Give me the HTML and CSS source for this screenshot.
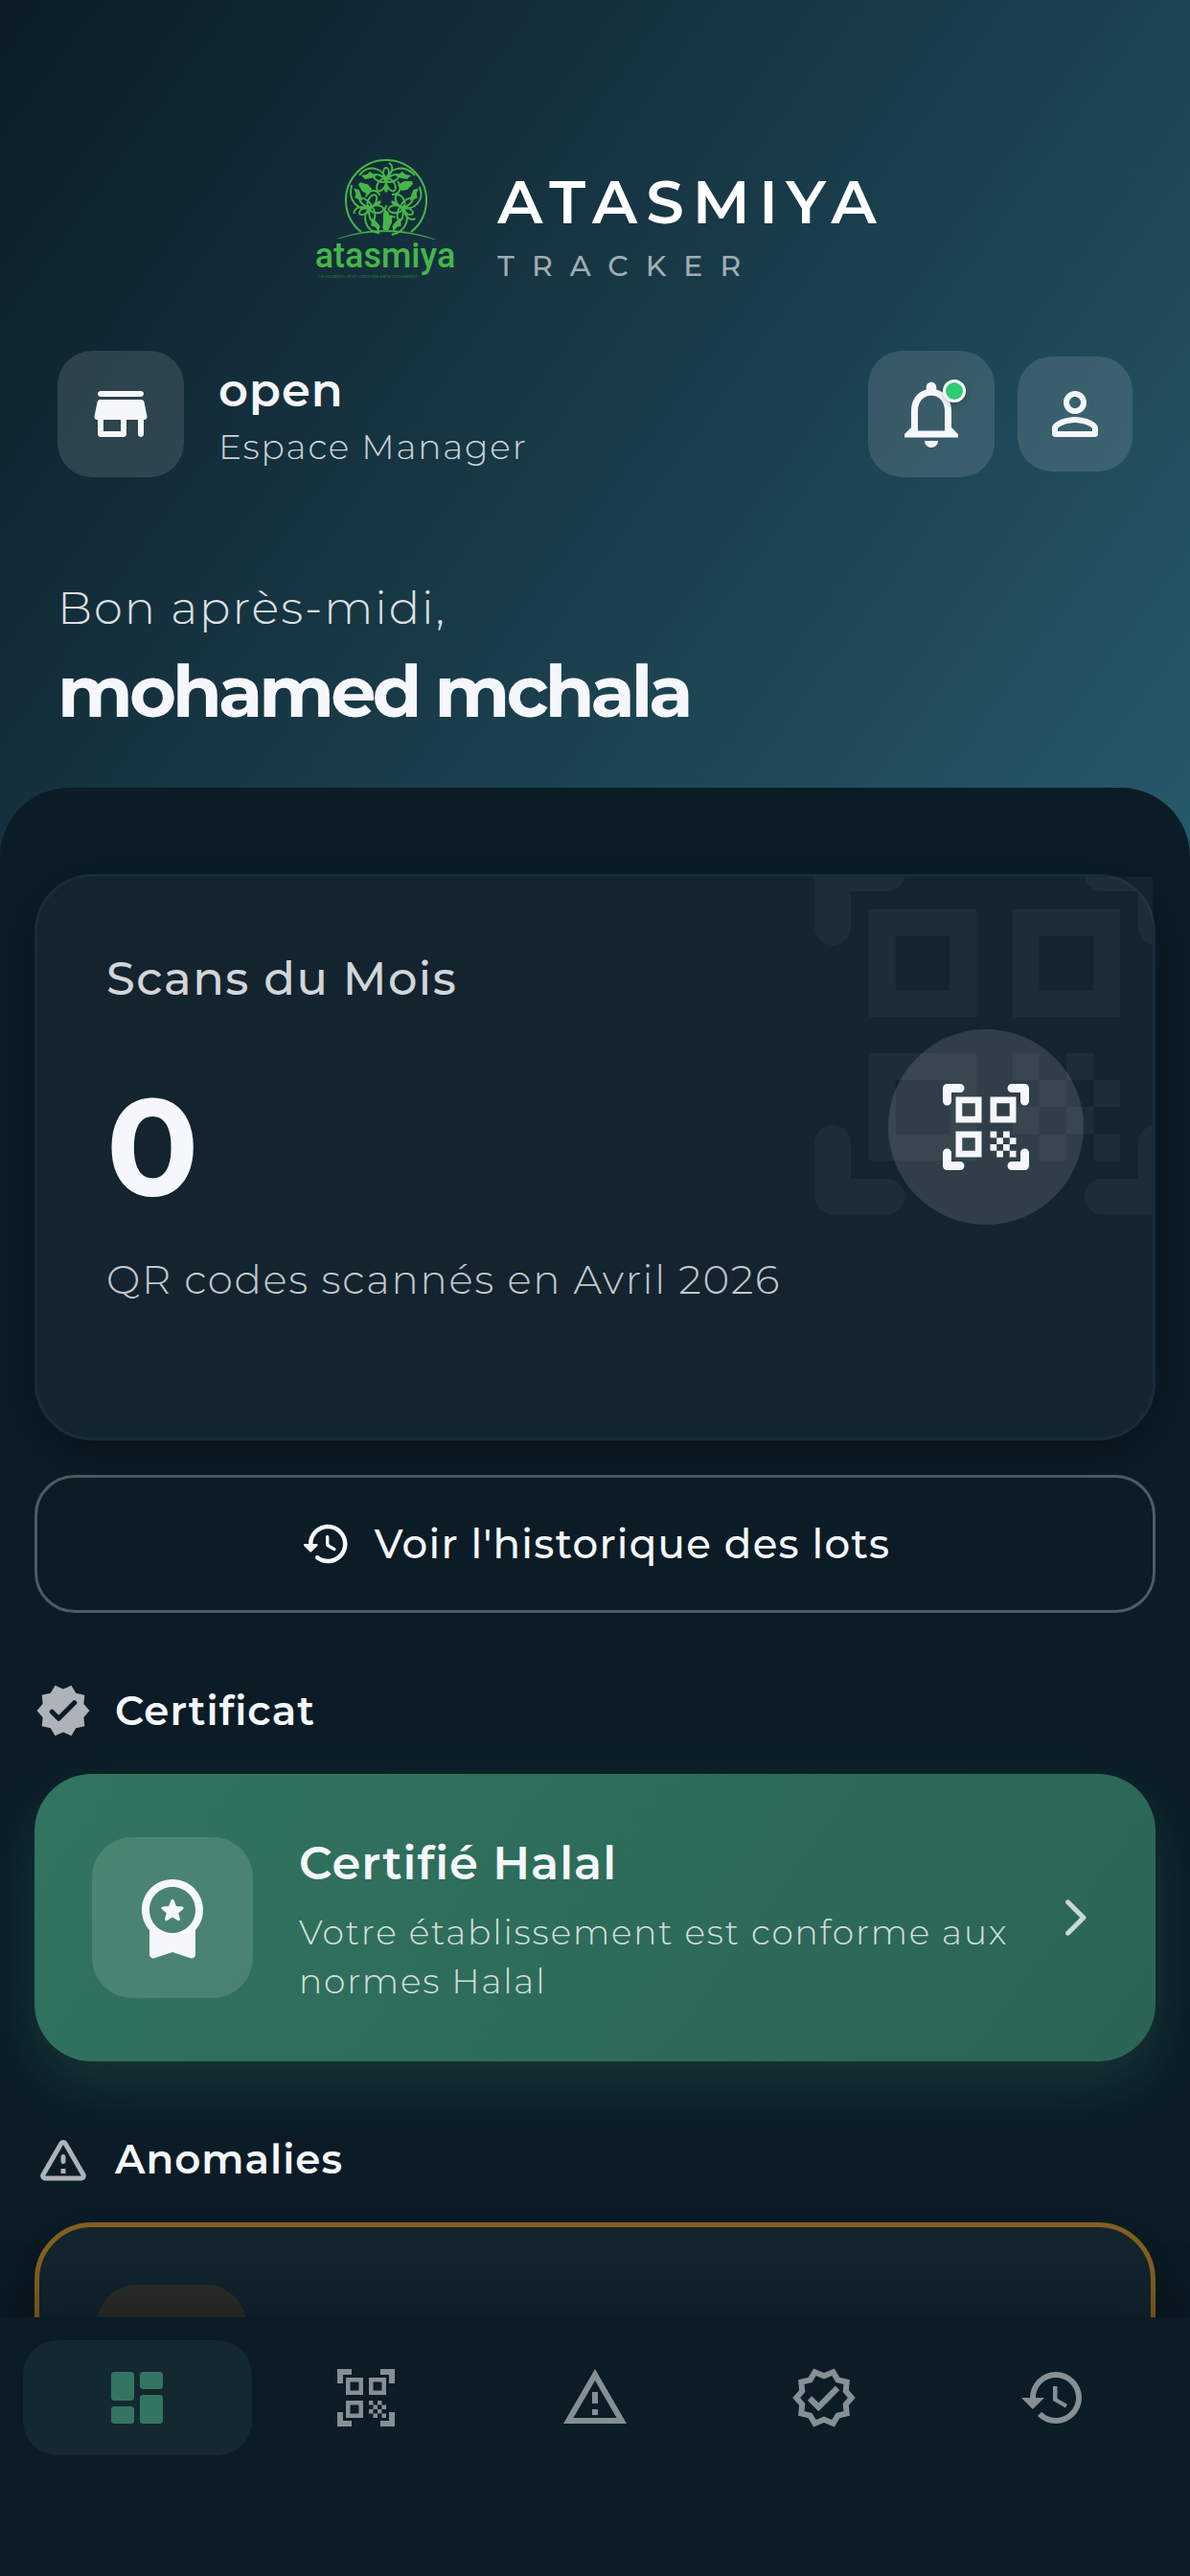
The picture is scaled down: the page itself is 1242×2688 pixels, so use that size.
FILE: index.html
```html
<!DOCTYPE html>
<html lang="fr">
<head>
    <meta charset="UTF-8">
    <meta name="viewport" content="width=device-width, initial-scale=1.0">
    <title>Atasmiya Tracker</title>
    <link rel="stylesheet" href="styles.css">
</head>
<body>
    <!-- Shared icon shapes -->
    <svg class="defs" width="0" height="0" aria-hidden="true">
        <defs>
            <g id="qr-cells">
                <path d="M9.5 6.5v3h-3v-3h3M11 5H5v6h6V5zm-1.5 9.5v3h-3v-3h3M11 13H5v6h6v-6zm6.5-6.5v3h-3v-3h3M19 5h-6v6h6V5zm-6 8h1.5v1.5H13V13zm1.5 1.5H16V16h-1.5v-1.5zM16 13h1.5v1.5H16V13zm-3 3h1.5v1.5H13V16zm1.5 1.5H16V19h-1.5v-1.5zM16 16h1.5v1.5H16V16zm1.5-1.5H19V16h-1.5v-1.5zm0 3H19V19h-1.5v-1.5z"/>
            </g>
            <g id="qr-rounded">
                <use href="#qr-cells"/>
                <path d="M3 6V3h3M18 3h3v3M21 18v3h-3M6 21H3v-3" fill="none" stroke="currentColor" stroke-width="2" stroke-linecap="round" stroke-linejoin="round"/>
            </g>
            <g id="motif">
                <g fill="none" stroke="#46b649" stroke-width="2">
                    <ellipse cx="76" cy="22" rx="3" ry="6"/>
                    <ellipse cx="69" cy="27" rx="3" ry="7" transform="rotate(-65 69 27)"/>
                    <ellipse cx="83" cy="27" rx="3" ry="7" transform="rotate(65 83 27)"/>
                    <ellipse cx="71" cy="34" rx="4" ry="7" transform="rotate(30 71 34)"/>
                    <ellipse cx="81" cy="34" rx="4" ry="7" transform="rotate(-30 81 34)"/>
                    <path d="M76 29c-2-12-18-18-28-5M76 29c2-12 18-18 30-5M79 11c5 3 4 9-1 14M88 30c5 8 2 14-6 14"/>
                </g>
                <path d="M76 32c2 4 3 8 0 10c-3-2-2-6 0-10zM86 25l7-5 3 3 6 1-4 4-6-1zM66 25l-7-5-3 3-6 1 4 4 6-1zM88 34l7-4 8 0 1 3-6 6-6 1z"/>
            </g>
        </defs>
    </svg>

    <div class="app">
        <main class="content">
            <header class="hero">
                <div class="brand">
                    <svg class="logo" viewBox="0 0 150 150" role="img" aria-label="Atasmiya">
                        <path d="M50 83A42 42 0 1 1 102 83" fill="none" stroke="#46b649" stroke-width="2"/>
                        <g fill="#46b649">
                            <use href="#motif"/>
                            <use href="#motif" transform="rotate(120 76 48)"/>
                            <use href="#motif" transform="rotate(240 76 48)"/>
                            <path d="M76 61c4 0 3 6 3 10s2 8-1 10h-4c-3-2-1-6-1-10s-1-10 3-10z"/>
                        </g>
                        <path d="M26 90Q76 72 127 91Q76 75 26 90z" fill="#46b649" stroke="#46b649" stroke-opacity="0.4"/>
                        <text class="logo-name" x="75" y="120" text-anchor="middle">atasmiya</text>
                        <text class="logo-tag" x="5" y="131">La vocation d'un contrôle sans concession</text>
                    </svg>
                    <div class="brand-text">
                        <div class="brand-title">ATASMIYA</div>
                        <div class="brand-subtitle">TRACKER</div>
                    </div>
                </div>

                <div class="user-row">
                    <div class="tile">
                        <svg class="icon" viewBox="0 0 24 24"><path d="M5 6h14c.55 0 1-.45 1-1s-.45-1-1-1H5c-.55 0-1 .45-1 1s.45 1 1 1zm15.16 1.8c-.09-.46-.5-.8-.98-.8H4.82c-.48 0-.89.34-.98.8l-1 5c-.12.62.35 1.2.98 1.2H4v5c0 .55.45 1 1 1h8c.55 0 1-.45 1-1v-5h4v5c0 .55.45 1 1 1s1-.45 1-1v-5h.18c.63 0 1.1-.58.98-1.2l-1-5zM12 18H6v-4h6v4z"/></svg>
                    </div>
                    <div class="user-info">
                        <div class="shop-name">open</div>
                        <div class="shop-role">Espace Manager</div>
                    </div>
                    <button type="button" class="tile bell" aria-label="Notifications">
                        <svg class="icon icon-bell" viewBox="0 0 24 24"><path d="M12 22c1.1 0 2-.9 2-2h-4c0 1.1.89 2 2 2zm6-6v-5c0-3.07-1.64-5.64-4.5-6.32V4c0-.83-.67-1.5-1.5-1.5s-1.5.67-1.5 1.5v.68C7.63 5.36 6 7.92 6 11v5l-2 2v1h16v-1l-2-2zm-2 1H8v-6c0-2.48 1.51-4.5 4-4.5s4 2.02 4 4.5v6z"/></svg>
                        <span class="badge"></span>
                    </button>
                    <button type="button" class="tile profile" aria-label="Profil">
                        <svg class="icon" viewBox="0 0 24 24"><path d="M12 6c1.1 0 2 .9 2 2s-.9 2-2 2-2-.9-2-2 .9-2 2-2m0 9c2.7 0 5.8 1.29 6 2v1H6v-.99c.2-.72 3.3-2.01 6-2.01m0-11C9.79 4 8 5.79 8 8s1.79 4 4 4 4-1.79 4-4-1.79-4-4-4zm0 9c-2.67 0-8 1.34-8 4v2c0 .55.45 1 1 1h14c.55 0 1-.45 1-1v-2c0-2.66-5.33-4-8-4z"/></svg>
                    </button>
                </div>

                <div class="greeting">Bon après-midi,</div>
                <h1>mohamed mchala</h1>
            </header>

            <div class="sheet">
                <section class="card scans">
                    <div class="scans-bg">
                        <svg viewBox="0 0 24 24"><use href="#qr-rounded"/></svg>
                    </div>
                    <div class="scans-text">
                        <div class="scans-label">Scans du Mois</div>
                        <div class="scans-value">0</div>
                        <div class="scans-note">QR codes scannés en Avril 2026</div>
                    </div>
                    <div class="scans-circle">
                        <svg class="icon icon-scan" viewBox="0 0 24 24"><use href="#qr-rounded"/></svg>
                    </div>
                </section>

                <button type="button" class="history-button">
                    <svg class="icon icon-history" viewBox="0 0 24 24"><path d="M13.26 3C8.17 2.86 4 6.95 4 12H2.21c-.45 0-.67.54-.35.85l2.79 2.8c.2.2.51.2.71 0l2.79-2.8c.31-.31.09-.85-.36-.85H6c0-3.9 3.18-7.05 7.1-7 3.72.05 6.85 3.18 6.9 6.9.05 3.91-3.1 7.1-7 7.1-1.61 0-3.1-.55-4.28-1.48-.4-.31-.96-.28-1.32.08-.42.42-.39 1.13.08 1.49C9 20.29 10.91 21 13 21c5.05 0 9.14-4.17 9-9.26-.13-4.69-4.05-8.61-8.74-8.74zm-.51 5c-.41 0-.75.34-.75.75v3.68c0 .35.19.68.49.86l3.12 1.85c.36.21.82.09 1.03-.26.21-.36.09-.82-.26-1.03l-2.88-1.71v-3.4c0-.4-.34-.74-.75-.74z"/></svg>
                    Voir l'historique des lots
                </button>

                <h2>
                    <svg class="icon icon-section" viewBox="0 0 24 24"><path d="M23 12l-2.44-2.79.34-3.69-3.61-.82-1.89-3.2L12 2.96 8.6 1.5 6.71 4.69 3.1 5.5l.34 3.7L1 12l2.44 2.79-.34 3.7 3.61.82L8.6 22.5l3.4-1.47 3.4 1.46 1.89-3.19 3.61-.82-.34-3.69L23 12z"/><path d="M7.3 12.5l2.8 2.8 6.6-6.6" fill="none" stroke="#0b1c26" stroke-width="2" stroke-linecap="round" stroke-linejoin="round"/></svg>
                    Certificat
                </h2>
                <a href="#certificat" class="cert-card">
                    <span class="cert-tile">
                        <svg class="icon icon-medal" viewBox="0 0 24 24"><path d="M20 10c0-4.42-3.58-8-8-8s-8 3.58-8 8c0 2.03.76 3.87 2 5.28v6.33c0 .68.67 1.16 1.32.95L12 21l4.68 1.56c.65.21 1.32-.27 1.32-.95v-6.33A7.96 7.96 0 0 0 20 10zm-8-6c3.31 0 6 2.69 6 6s-2.69 6-6 6-6-2.69-6-6 2.69-6 6-6z"/><path d="M12 7.6l.7 1.8 1.8.1-1.4 1.2.5 1.7-1.6-1-1.6 1 .5-1.7-1.4-1.2 1.8-.1z" stroke="currentColor" stroke-width=".8" stroke-linejoin="round"/></svg>
                    </span>
                    <span class="cert-text">
                        <span class="cert-title">Certifié Halal</span>
                        <span class="cert-note">Votre établissement est conforme aux normes Halal</span>
                    </span>
                    <svg class="icon icon-arrow" viewBox="0 0 24 24"><path d="M7.38 21.01c.49.49 1.28.49 1.77 0l8.31-8.31c.39-.39.39-1.02 0-1.41L9.15 2.98c-.49-.49-1.28-.49-1.77 0s-.49 1.28 0 1.77L14.62 12l-7.25 7.25c-.48.48-.48 1.28.01 1.76z"/></svg>
                </a>

                <h2>
                    <svg class="icon icon-section" viewBox="0 0 24 24"><path d="M12 5.99L19.53 19H4.47L12 5.99M2.74 18c-.77 1.33.19 3 1.73 3h15.06c1.54 0 2.5-1.67 1.73-3L13.73 4.99c-.77-1.33-2.69-1.33-3.46 0L2.74 18zM11 11v2c0 .55.45 1 1 1s1-.45 1-1v-2c0-.55-.45-1-1-1s-1 .45-1 1zm0 5h2v2h-2z"/></svg>
                    Anomalies
                </h2>
                <section class="card anomaly">
                    <div class="anomaly-tile"></div>
                </section>
            </div>
        </main>

        <nav class="tabs">
            <a href="#accueil" class="tab active" aria-label="Accueil">
                <svg class="icon" viewBox="0 0 24 24"><path d="M4 13h6c.55 0 1-.45 1-1V4c0-.55-.45-1-1-1H4c-.55 0-1 .45-1 1v8c0 .55.45 1 1 1zm0 8h6c.55 0 1-.45 1-1v-4c0-.55-.45-1-1-1H4c-.55 0-1 .45-1 1v4c0 .55.45 1 1 1zm10 0h6c.55 0 1-.45 1-1v-8c0-.55-.45-1-1-1h-6c-.55 0-1 .45-1 1v8c0 .55.45 1 1 1zM13 4v4c0 .55.45 1 1 1h6c.55 0 1-.45 1-1V4c0-.55-.45-1-1-1h-6c-.55 0-1 .45-1 1z"/></svg>
            </a>
            <a href="#scanner" class="tab" aria-label="Scanner">
                <svg class="icon" viewBox="0 0 24 24"><use href="#qr-cells"/><path d="M22 7h-2V4h-3V2h5v5zm0 15v-5h-2v3h-3v2h5zM2 22h5v-2H4v-3H2v5zM2 2v5h2V4h3V2H2z"/></svg>
            </a>
            <a href="#anomalies" class="tab" aria-label="Anomalies">
                <svg class="icon" viewBox="0 0 24 24"><path d="M12 5.99L19.53 19H4.47L12 5.99M12 2L1 21h22L12 2zm1 14h-2v2h2v-2zm0-6h-2v4h2v-4z"/></svg>
            </a>
            <a href="#certificat" class="tab" aria-label="Certificat">
                <svg class="icon" viewBox="0 0 24 24"><path d="M21.6 12l-2-2.3.3-3.2-3.1-.7-1.6-2.7L12 4.4 8.8 3.1 7.2 5.8l-3.1.7.3 3.2-2 2.3 2 2.3-.3 3.2 3.1.7 1.6 2.7L12 19.6l3.2 1.3 1.6-2.7 3.1-.7-.3-3.2z" fill="none" stroke="currentColor" stroke-width="2"/><path d="M10.09 16.72l-3.8-3.81 1.48-1.49 2.32 2.33 5.86-5.88 1.48 1.49z"/></svg>
            </a>
            <a href="#historique" class="tab" aria-label="Historique">
                <svg class="icon" viewBox="0 0 24 24"><path d="M13 3a9 9 0 0 0-9 9H1l3.89 3.89.07.14L9 12H6c0-3.87 3.13-7 7-7s7 3.13 7 7-3.13 7-7 7c-1.93 0-3.68-.79-4.94-2.06l-1.42 1.42A8.954 8.954 0 0 0 13 21a9 9 0 0 0 0-18zm-1 5v5l4.28 2.54.72-1.21-3.5-2.08V8H12z"/></svg>
            </a>
        </nav>
    </div>
</body>
</html>
```
FILE: styles.css
```css
* {
    box-sizing: border-box;
}

body {
    margin: 0;
    font-family: Montserrat, Inter, sans-serif;
    background: #0b1c26;
    color: #f5f7fc;
}

button {
    font: inherit;
    color: inherit;
    border: none;
    padding: 0;
    cursor: pointer;
}

a {
    color: inherit;
    text-decoration: none;
}

.defs {
    position: absolute;
}

.app {
    display: flex;
    flex-direction: column;
    height: 100vh;
}

.content {
    flex: 1;
    min-height: 0;
    overflow: hidden;
}

.icon {
    width: 72px;
    height: 72px;
    fill: currentColor;
    flex-shrink: 0;
}

/* Header */
.hero {
    padding: 159px 60px 128px;
    background: linear-gradient(126deg, #0b1c26, #26596a);
}

.brand {
    display: flex;
    justify-content: center;
    align-items: center;
    gap: 42px;
}

.logo {
    width: 150px;
    height: 150px;
}

.logo-name {
    font-family: Roboto, sans-serif;
    font-size: 36px;
    font-weight: 500;
    fill: #46b649;
}

.logo-tag {
    font-size: 5px;
    fill: #46b649;
    opacity: 0.6;
}

/* cancels the tracking after the last letter */
.brand-text {
    margin-right: -9px;
}

.brand-title {
    font-size: 63px;
    line-height: 75px;
    font-weight: 600;
    letter-spacing: 9px;
    color: #fff;
}

.brand-subtitle {
    margin-top: 12px;
    font-size: 30px;
    line-height: 36px;
    font-weight: 500;
    letter-spacing: 18px;
    color: rgba(255, 255, 255, 0.6);
}

.user-row {
    display: flex;
    align-items: center;
    margin-top: 57px;
}

.tile {
    display: flex;
    align-items: center;
    justify-content: center;
    width: 132px;
    height: 132px;
    border-radius: 36px;
    background: rgba(255, 255, 255, 0.12);
}

.user-info {
    flex: 1;
    margin-left: 36px;
}

.shop-name {
    font-size: 48px;
    line-height: 60px;
    font-weight: 600;
    letter-spacing: 1px;
}

.shop-role {
    margin-top: 8px;
    font-size: 36px;
    line-height: 42px;
    font-weight: 300;
    letter-spacing: 0.05em;
    color: rgba(255, 255, 255, 0.8);
}

.bell {
    position: relative;
}

.icon-bell {
    width: 84px;
    height: 84px;
}

.badge {
    position: absolute;
    top: 30px;
    right: 30px;
    width: 24px;
    height: 24px;
    border: 3px solid #fff;
    border-radius: 50%;
    background: #2ecc71;
    box-shadow: 0 3px 6px rgba(0, 0, 0, 0.2);
}

.profile {
    width: 120px;
    height: 120px;
    margin-left: 24px;
}

.greeting {
    margin-top: 106px;
    font-size: 48px;
    line-height: 60px;
    font-weight: 300;
    letter-spacing: 0.04em;
    color: rgba(255, 255, 255, 0.87);
}

h1 {
    margin: 12px 0 0;
    font-size: 75px;
    line-height: 90px;
    font-weight: 700;
    letter-spacing: -4px;
}

/* Sheet over the header */
.sheet {
    margin-top: -72px;
    padding: 90px 36px 0;
    border-radius: 72px 72px 0 0;
    background: #0b1c26;
}

.card {
    border: 3px solid #162c3a;
    border-radius: 60px;
    background: #13242f;
    box-shadow: 0 12px 48px rgba(0, 0, 0, 0.3);
}

.scans {
    position: relative;
    display: flex;
    align-items: center;
    justify-content: space-between;
    padding: 75px 72px 138px;
}

.scans-bg {
    position: absolute;
    inset: 0;
    overflow: hidden;
}

.scans-bg svg {
    position: absolute;
    top: -60px;
    right: -60px;
    width: 450px;
    height: 450px;
    fill: currentColor;
    opacity: 0.04;
}

.scans-text {
    position: relative;
}

.scans-label {
    font-size: 48px;
    line-height: 63px;
    font-weight: 500;
    letter-spacing: 0.03em;
    color: rgba(255, 255, 255, 0.82);
}

.scans-value {
    margin-top: 60px;
    font-size: 142px;
    line-height: 168px;
    font-weight: 700;
}

.scans-note {
    margin-top: 27px;
    font-size: 42px;
    line-height: 54px;
    font-weight: 300;
    letter-spacing: 0.04em;
    color: rgba(255, 255, 255, 0.75);
}

.scans-circle {
    position: relative;
    display: flex;
    align-items: center;
    justify-content: center;
    width: 204px;
    height: 204px;
    border-radius: 50%;
    background: rgba(255, 255, 255, 0.12);
}

.icon-scan {
    width: 108px;
    height: 108px;
}

.history-button {
    display: flex;
    align-items: center;
    justify-content: center;
    gap: 24px;
    width: 100%;
    height: 144px;
    margin-top: 36px;
    border: 3px solid #4f5b62;
    border-radius: 42px;
    background: transparent;
    font-size: 42px;
    font-weight: 500;
    letter-spacing: 0.03em;
}

.icon-history {
    width: 54px;
    height: 54px;
}

h2 {
    display: flex;
    align-items: center;
    gap: 24px;
    margin: 72px 0 36px;
    font-size: 42px;
    line-height: 60px;
    font-weight: 600;
    letter-spacing: 1px;
}

.icon-section {
    width: 60px;
    height: 60px;
    color: #adb3b9;
}

/* Certificate */
.cert-card {
    display: flex;
    align-items: center;
    min-height: 300px;
    padding: 48px 60px;
    border-radius: 60px;
    background: linear-gradient(126deg, #31745f, #2b6455);
    box-shadow: 0 24px 60px rgba(49, 116, 95, 0.3);
}

.cert-tile {
    display: flex;
    align-items: center;
    justify-content: center;
    width: 168px;
    height: 168px;
    border-radius: 42px;
    background: rgba(255, 255, 255, 0.13);
}

.icon-medal {
    width: 96px;
    height: 96px;
}

.cert-text {
    flex: 1;
    margin: 0 24px 0 48px;
}

.cert-title {
    display: block;
    font-size: 48px;
    line-height: 68px;
    font-weight: 600;
    letter-spacing: 1px;
}

.cert-note {
    display: block;
    margin-top: 13px;
    font-size: 36px;
    line-height: 51px;
    font-weight: 300;
    letter-spacing: 0.05em;
    color: rgba(255, 255, 255, 0.8);
}

.icon-arrow {
    width: 48px;
    height: 48px;
    color: rgba(255, 255, 255, 0.75);
}

/* Anomalies */
.anomaly {
    padding: 60px;
    border: 5px solid #835f20;
}

.anomaly-tile {
    width: 156px;
    height: 156px;
    border-radius: 42px;
    background: rgba(255, 152, 0, 0.1);
}

/* Bottom navigation */
.tabs {
    position: relative;
    display: flex;
    padding: 24px 24px 126px;
    background: #0b1c26;
    box-shadow: 0 -12px 60px rgba(0, 0, 0, 0.3);
}

.tab {
    display: flex;
    flex: 1;
    align-items: center;
    justify-content: center;
    height: 120px;
    border-radius: 36px;
    color: #868f94;
}

.tab.active {
    background: #13292f;
    color: #337562;
}
```
